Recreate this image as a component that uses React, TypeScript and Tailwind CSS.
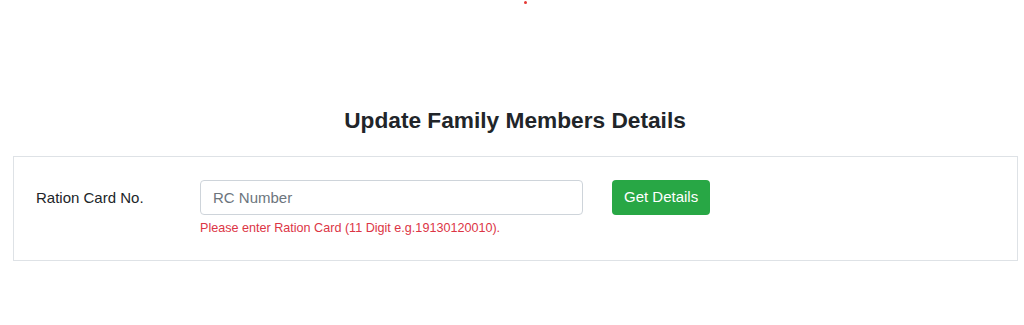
export default function App() {
  return (
    <div className="w-[1024px] h-[325px] bg-white font-['Liberation_Sans',Arial,sans-serif] text-[#212529]">
      {/* stray red dot at top */}
      <div className="h-[96px] pt-[1px]">
        <div className="ml-[524px] w-[3px] h-[3px] rounded-full bg-[#e53935]" />
      </div>

      <h1 className="text-center text-[22.7px] font-bold leading-[48px] h-[48px] pl-[6px]">
        Update Family Members Details
      </h1>

      <div className="pl-[13px] pr-[6px] pt-[12px]">
        <div className="border border-[#dee2e6] h-[105px] flex items-start pt-[23px] pl-[22px]">
          <label className="w-[164px] text-[15px] leading-[35px]">Ration Card No.</label>
          <div className="w-[383px]">
            <input
              type="text"
              placeholder="RC Number"
              className="w-full h-[35px] border border-[#ced4da] rounded-[4px] px-[12px] text-[15px] placeholder:text-[#6c757d] outline-none"
            />
            <div className="text-[12.6px] leading-[14px] mt-[6px] text-[#dc3545]">
              Please enter Ration Card (11 Digit e.g.19130120010).
            </div>
          </div>
          <button className="ml-[29px] h-[35px] px-[12px] rounded-[4px] bg-[#28a745] text-white text-[15px]">
            Get Details
          </button>
        </div>
      </div>
    </div>
  )
}
